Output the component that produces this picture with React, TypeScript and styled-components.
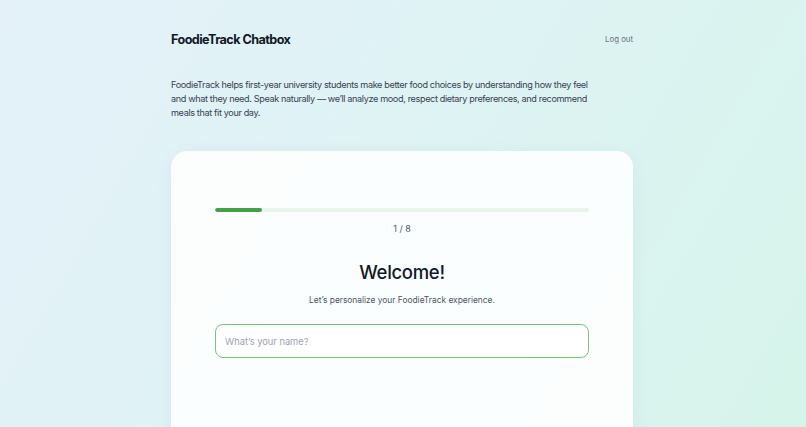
import { createGlobalStyle, styled } from 'styled-components';

const GlobalStyle = createGlobalStyle`
    html, body {
        margin: 0;
        padding: 0;
    }

    body {
        font-family: Inter, "Noto Sans", sans-serif;
        color: #1f2937;
        background: linear-gradient(120deg, #e4f1f9 0%, #def3f4 50%, #d6f4ea 100%);
        min-height: 100vh;
        overflow: hidden;
    }
`;

const Page = styled.div`
    min-height: 100vh;
    padding-top: 28px;
    box-sizing: border-box;
`;

const Container = styled.div`
    width: 462px;
    margin-left: calc(50% - 232px);
`;

const Header = styled.header`
    display: flex;
    align-items: center;
    justify-content: space-between;
    height: 22px;
`;

const Brand = styled.h1`
    margin: 0;
    font-size: 12.6px;
    font-weight: 700;
    letter-spacing: -0.55px;
    color: #111827;
`;

const LogOut = styled.button`
    border: none;
    background: none;
    padding: 0;
    font-family: inherit;
    font-size: 7.8px;
    color: #6b7280;
    cursor: pointer;
`;

const Intro = styled.p`
    margin: 28px 0 0;
    max-width: 422px;
    font-size: 9.1px;
    letter-spacing: -0.36px;
    line-height: 14px;
    color: #374151;
`;

const Card = styled.section`
    margin-top: 31px;
    background: rgba(255, 255, 255, 0.88);
    border-radius: 16px;
    box-shadow: 0 4px 18px rgba(15, 60, 70, 0.05);
    padding: 57px 44px 80px;
    min-height: 300px;
    box-sizing: border-box;
`;

const Track = styled.div`
    height: 4px;
    border-radius: 2px;
    background: #e6f4ea;
    overflow: hidden;
`;

const Fill = styled.div`
    height: 100%;
    border-radius: 2px;
    background: #43a047;
`;

const StepCount = styled.div`
    margin-top: 10px;
    text-align: center;
    font-size: 9px;
    line-height: 14px;
    color: #4b5563;
`;

const Title = styled.h2`
    margin: 23px 0 0;
    text-align: center;
    font-size: 18.5px;
    line-height: 26px;
    font-weight: 500;
    letter-spacing: -0.3px;
    color: #111827;
`;

const Subtitle = styled.p`
    margin: 8px 0 0;
    text-align: center;
    font-size: 8.4px;
    line-height: 14px;
    color: #4b5563;
`;

const NameInput = styled.input`
    display: block;
    width: 100%;
    box-sizing: border-box;
    margin-top: 17px;
    height: 34px;
    padding: 0 9px;
    border: 1.5px solid #78c47b;
    border-radius: 8px;
    background: #fff;
    font-family: inherit;
    font-size: 9.3px;
    color: #111827;
    outline: none;

    &::placeholder {
        color: #9ca3af;
    }
`;

const step = 1;
const total = 8;

const App = () => {
    return <Page>
        <GlobalStyle />
        <Container>
            <Header>
                <Brand>FoodieTrack Chatbox</Brand>
                <LogOut>Log out</LogOut>
            </Header>
            <Intro>
                FoodieTrack helps first-year university students make better food choices by understanding how they feel
                and what they need. Speak naturally — we’ll analyze mood, respect dietary preferences, and recommend
                meals that fit your day.
            </Intro>
            <Card>
                <Track>
                    <Fill style={{ width: `${(step / total) * 100}%` }} />
                </Track>
                <StepCount>{step} / {total}</StepCount>
                <Title>Welcome!</Title>
                <Subtitle>Let’s personalize your FoodieTrack experience.</Subtitle>
                <NameInput placeholder="What’s your name?" />
            </Card>
        </Container>
    </Page>
}

export default App;
